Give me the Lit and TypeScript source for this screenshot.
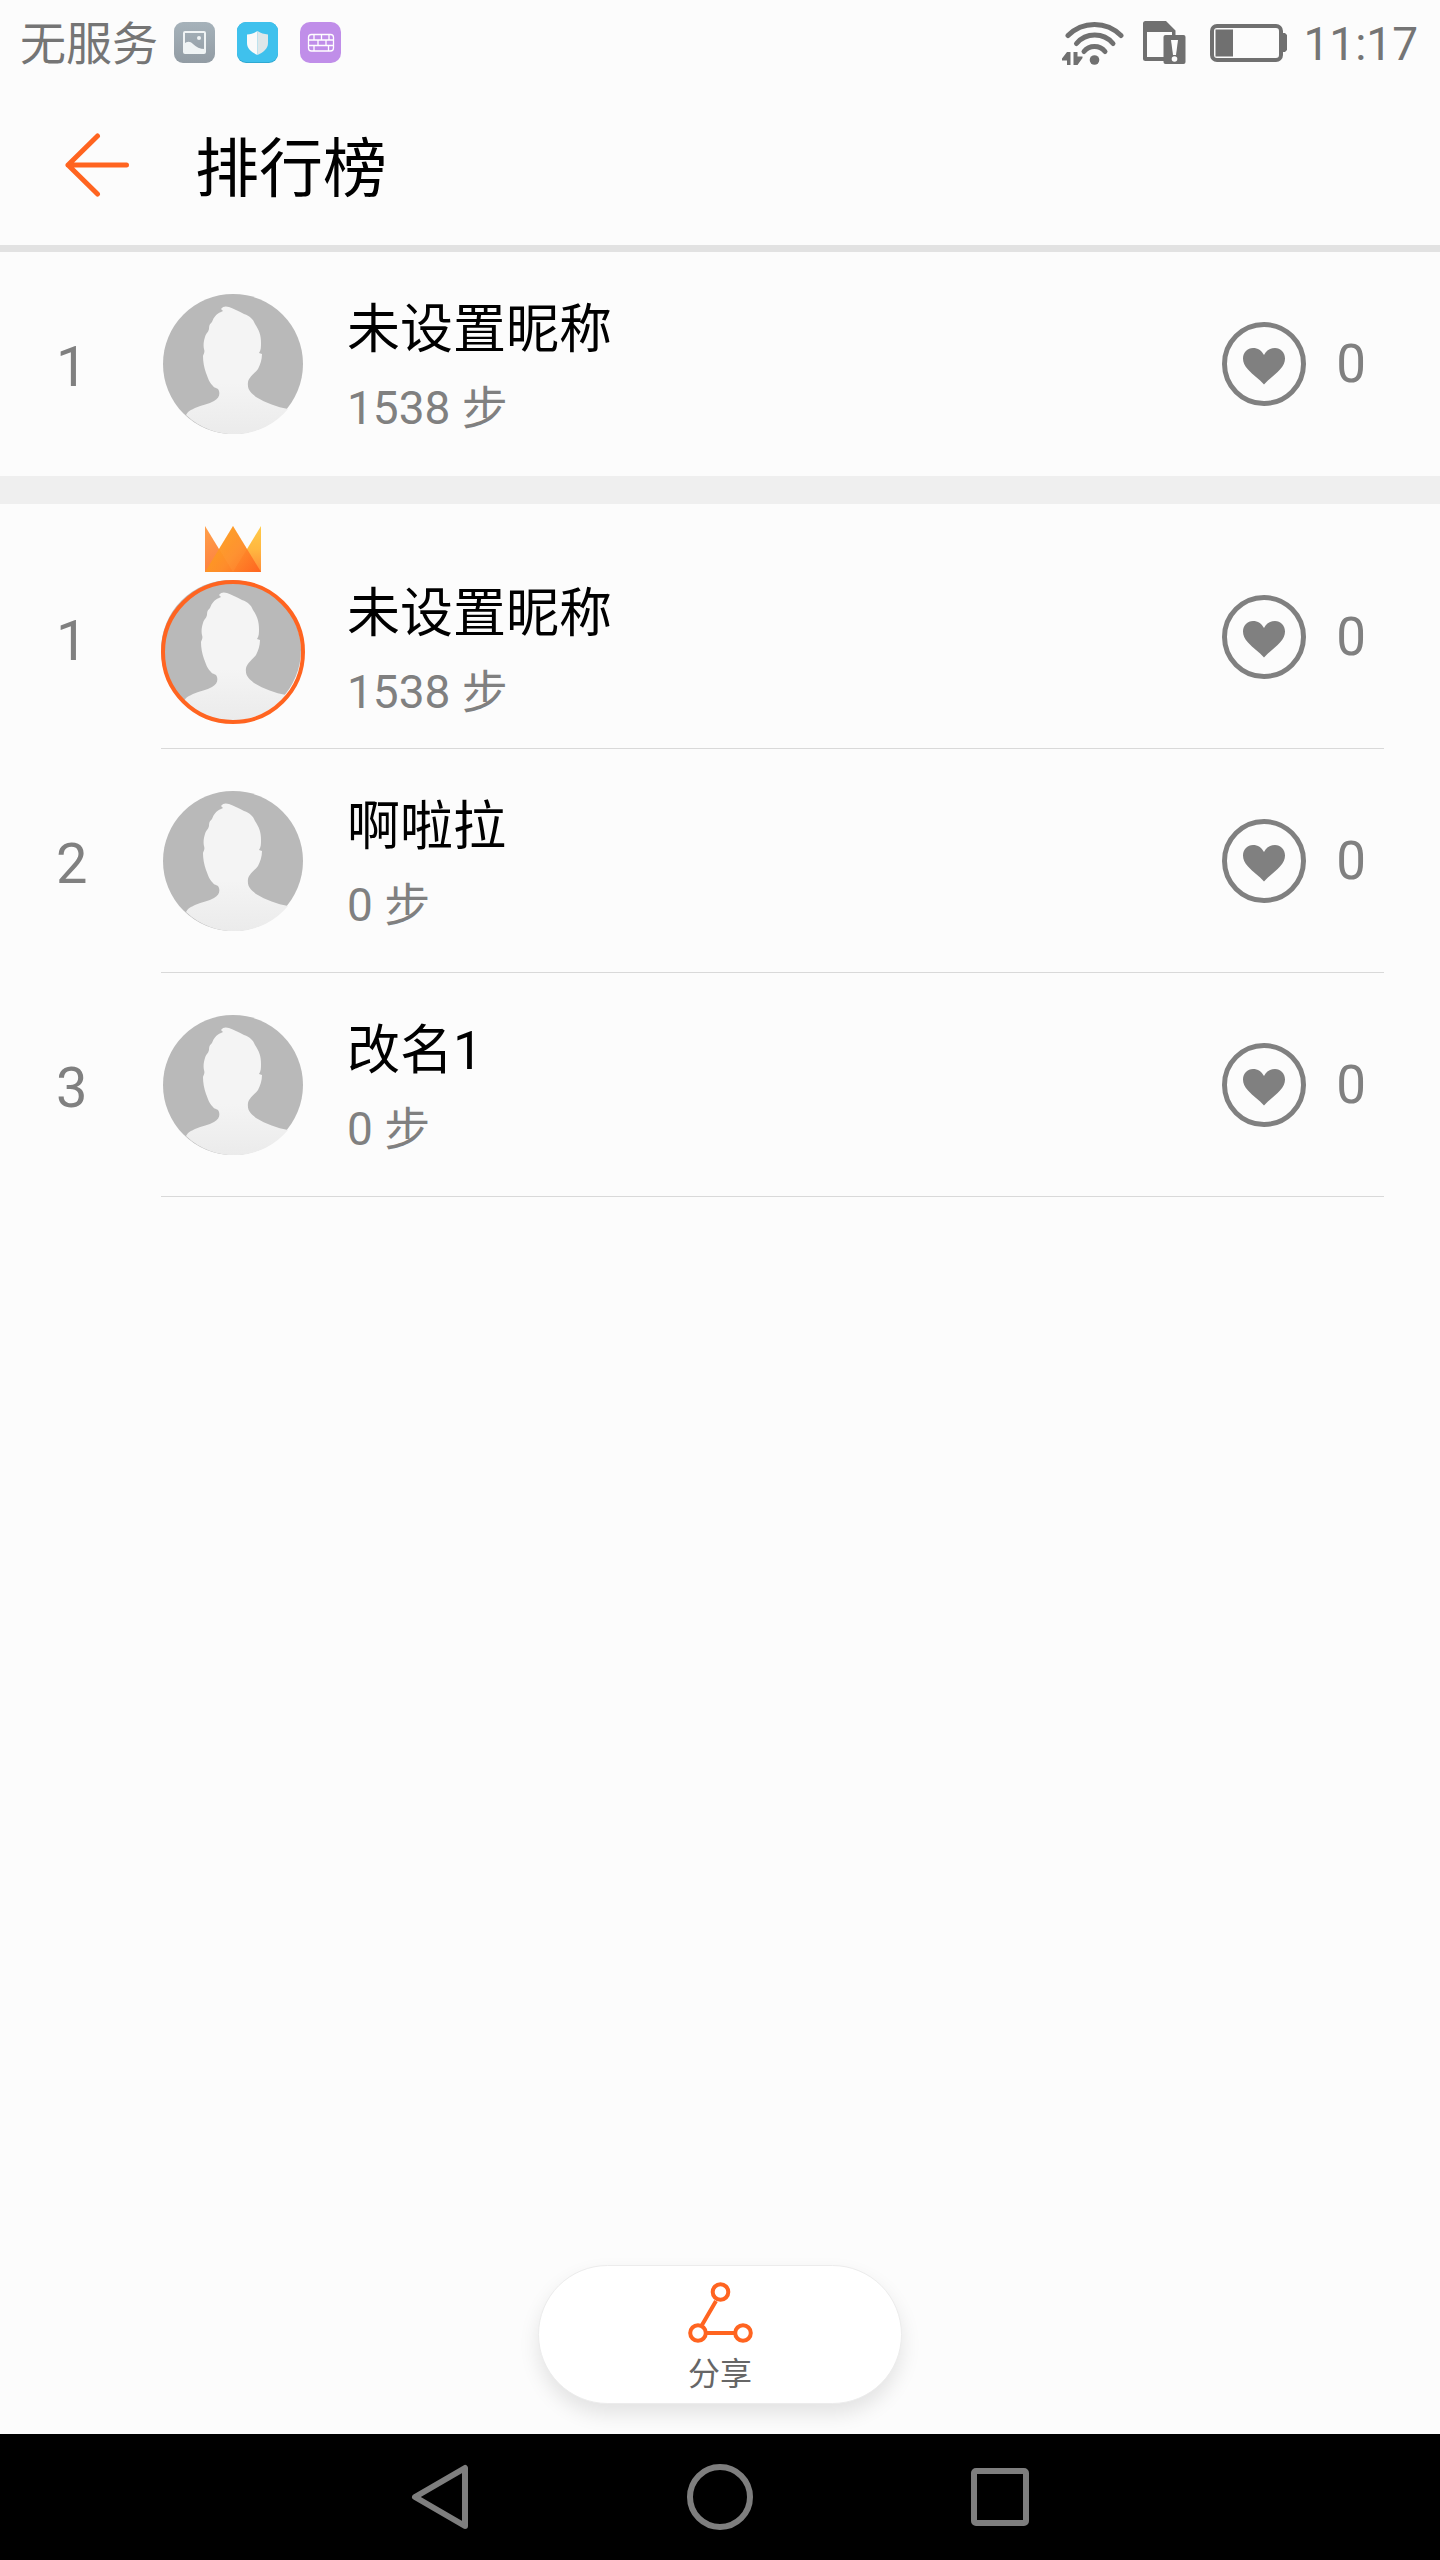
import { LitElement, html, css, svg, nothing } from "lit";
import { customElement, property, state } from "lit/decorators.js";
import { classMap } from "lit/directives/class-map.js";

interface Entry {
  rank: number;
  name: string;
  steps: number;
  likes: number;
  crowned?: boolean;
}

const own: Entry = { rank: 1, name: "未设置昵称", steps: 1538, likes: 0 };

const ranking: Entry[] = [
  { rank: 1, name: "未设置昵称", steps: 1538, likes: 0, crowned: true },
  { rank: 2, name: "啊啦拉", steps: 0, likes: 0 },
  { rank: 3, name: "改名1", steps: 0, likes: 0 },
];

const crown = html`
  <svg class="crown" viewBox="0 0 56 46" aria-hidden="true">
    <defs>
      <linearGradient id="crown-left" x1="0" y1="0" x2="0.3" y2="1">
        <stop offset="0" stop-color="#ffa04a" />
        <stop offset="1" stop-color="#fd8040" />
      </linearGradient>
      <linearGradient id="crown-right" x1="0" y1="0" x2="0" y2="1">
        <stop offset="0" stop-color="#ffca48" />
        <stop offset="0.5" stop-color="#ffb840" />
        <stop offset="1" stop-color="#ff8c38" />
      </linearGradient>
      <linearGradient id="crown-middle" x1="0" y1="0.3" x2="1" y2="1">
        <stop offset="0" stop-color="#fda21c" />
        <stop offset="0.5" stop-color="#fe8d2b" />
        <stop offset="1" stop-color="#ff6420" />
      </linearGradient>
    </defs>
    <path d="M0 0 28 46H0Z" fill="url(#crown-left)" />
    <path d="M56 0 28 46h28Z" fill="url(#crown-right)" />
    <path d="M28 0 56 46H0Z" fill="url(#crown-middle)" />
    <path d="M14 23 28 46 42 23 28 0Z" fill="#ffae50" opacity="0.18" />
  </svg>
`;

const silhouette =
  "M23 121C25 117 28 116 32 114C39 111 46 110 51 107C56 104 57 101 56 97C55 93 52 95 50 92C46 88 45 84 43 79C41 73 40 68 40 62C41 59 42 58 41 55C40 51 41 46 42 43C43 39 45 39 46 35C46 31 47 30 49 28C51 23 53 20 58 18L60 17L58 15C60 12 63 12 66 13C71 15 76 17 81 20C87 22 90 25 92 30C96 36 98 41 98 49C98 53 98 56 96 59L99 60C99 66 97 71 95 75C92 79 86 83 85 88C84 96 88 99 93 103C103 109 114 113 125 115A70 70 0 0 1 23 121Z";

@customElement("leader-row")
export class LeaderRow extends LitElement {
  @property({ attribute: false }) entry!: Entry;
  @property({ type: Boolean }) divided = false;
  @state() private liked = false;

  static styles = css`
    :host {
      display: block;
    }
    .row {
      display: flex;
      align-items: stretch;
      color: #808080;
    }
    .rank {
      box-sizing: border-box;
      flex: none;
      width: 161px;
      padding: 6px 0 0 56px;
      display: flex;
      align-items: center;
      font-size: 56px;
      line-height: 64px;
    }
    .body {
      flex: 1;
      min-width: 0;
      display: flex;
      align-items: center;
      margin-right: 56px;
      padding: 34px 18px 34px 0;
    }
    .divided .body {
      padding-bottom: 33px;
      border-bottom: 1px solid #d9d9d9;
    }
    .portrait {
      flex: none;
      width: 144px;
      display: flex;
      flex-direction: column;
      align-items: center;
      gap: 8px;
    }
    .crown {
      display: block;
      width: 56px;
      height: 46px;
    }
    .avatar {
      display: block;
      width: 140px;
      height: 140px;
    }
    .info {
      flex: 1;
      min-width: 0;
      margin-left: 42px;
    }
    .name {
      margin: 0;
      font-size: 53px;
      line-height: 88px;
      font-weight: 400;
      color: #000;
      overflow-wrap: anywhere;
    }
    .steps {
      margin: 0;
      font-size: 46px;
      line-height: 68px;
    }
    .like {
      flex: none;
      display: flex;
      align-items: center;
      gap: 30px;
      padding: 0;
      border: 0;
      background: none;
      color: inherit;
      font: inherit;
      font-size: 53px;
      line-height: 84px;
      cursor: pointer;
    }
    .heart {
      display: block;
      width: 84px;
      height: 84px;
    }
    .liked {
      color: #ff6420;
    }
    .crowned .body {
      padding-top: 20px;
      padding-bottom: 22px;
    }
    .crowned .rank {
      padding-top: 28px;
    }
    .crowned .like {
      padding-top: 24px;
    }
    .crowned .info {
      padding-top: 46px;
    }
    .crowned .avatar {
      width: 144px;
      height: 144px;
    }
  `;

  private toggle() {
    this.liked = !this.liked;
  }

  render() {
    const { rank, name, steps, likes, crowned } = this.entry;
    return html`
      <div class=${classMap({ row: true, divided: this.divided, crowned: !!crowned })}>
        <div class="rank">${rank}</div>
        <div class="body">
          <div class="portrait">
            ${crowned ? crown : nothing}
            <svg class="avatar" viewBox=${crowned ? "0 0 144 144" : "0 0 140 140"} aria-hidden="true">
              <defs>
                <linearGradient id="person" x1="0" y1="0" x2="0" y2="1">
                  <stop offset="0.6" stop-color="#f4f4f4" />
                  <stop offset="1" stop-color="#ebebeb" />
                </linearGradient>
              </defs>
              <circle cx="70" cy="70" r="70" fill="#b9b9b9" />
              <path d=${silhouette} fill="url(#person)" />
              ${crowned
                ? svg`<circle cx="72" cy="72" r="70" fill="none" stroke="#ff6420" stroke-width="4" />`
                : nothing}
            </svg>
          </div>
          <div class="info">
            <h2 class="name">${name}</h2>
            <p class="steps">${steps} 步</p>
          </div>
          <button
            type="button"
            class=${classMap({ like: true, liked: this.liked })}
            aria-pressed=${this.liked ? "true" : "false"}
            @click=${this.toggle}
          >
            <svg class="heart" viewBox="0 0 84 84" aria-hidden="true">
              <circle cx="42" cy="42" r="39.5" fill="none" stroke="currentColor" stroke-width="5" />
              <path
                d="M42 62.500C37 57 31 53 26 47.500C22.500 43.500 21 40.500 21 36.500C21 30.500 25.500 26 31 26C36 26 39.500 28.500 42 33C44.500 28.500 48 26 53 26C58.500 26 63 30.500 63 36.500C63 40.500 61.500 43.500 58 47.500C53 53 47 57 42 62.500Z"
                fill="currentColor"
              />
            </svg>
            <span>${likes + (this.liked ? 1 : 0)}</span>
          </button>
        </div>
      </div>
    `;
  }
}

@customElement("app-root")
export class AppRoot extends LitElement {
  static styles = css`
    :host {
      display: block;
      font-family: Roboto, "Noto Sans CJK SC", sans-serif;
      background: #fcfcfc;
    }
    .screen {
      min-height: 100vh;
      display: flex;
      flex-direction: column;
    }
    .status {
      display: flex;
      align-items: center;
      justify-content: space-between;
      padding: 0 22px 0 20px;
      color: #757575;
    }
    .carrier,
    .system {
      display: flex;
      align-items: center;
      gap: 22px;
    }
    .carrier-name {
      padding-top: 4px;
      font-size: 46px;
      line-height: 80px;
      margin-right: -6px;
    }
    .app-icon {
      display: block;
      width: 41px;
      height: 41px;
    }
    .system {
      padding-top: 2px;
    }
    .wifi {
      display: block;
      width: 62px;
      height: 44px;
      margin-right: -3px;
    }
    .sim {
      display: block;
      width: 43px;
      height: 44px;
    }
    .battery {
      display: block;
      width: 77px;
      height: 38px;
      margin-left: 2px;
    }
    .time {
      font-size: 46px;
      line-height: 80px;
      padding-top: 2px;
      margin-left: -6px;
    }
    .header {
      display: flex;
      align-items: center;
      gap: 66px;
      padding: 32px 65px;
      border-bottom: 7px solid #e2e2e2;
    }
    .back {
      flex: none;
      padding: 0;
      border: 0;
      background: none;
      cursor: pointer;
    }
    .back-icon {
      display: block;
      width: 64px;
      height: 64px;
    }
    .title {
      margin: 0;
      font-size: 64px;
      line-height: 86px;
      padding-top: 11px;
      font-weight: 400;
      color: #000;
    }
    .main {
      flex: 1;
    }
    .own {
      border-bottom: 28px solid #efefef;
    }
    .list {
      margin: 0;
      padding: 0;
      list-style: none;
    }
    .footer {
      display: flex;
      justify-content: center;
      padding: 30px;
    }
    .share {
      box-sizing: border-box;
      width: 364px;
      display: flex;
      flex-direction: column;
      align-items: center;
      gap: 10px;
      padding: 16px 40px 8px;
      border: 1px solid #ececec;
      border-radius: 70px;
      background: #fff;
      box-shadow: 0 10px 20px rgba(0, 0, 0, 0.1);
      color: #666;
      font: inherit;
      font-size: 32px;
      line-height: 42px;
      cursor: pointer;
    }
    .share-icon {
      display: block;
      width: 65px;
      height: 61px;
    }
    .nav {
      display: flex;
      justify-content: center;
      background: #000;
      color: #7e7e7e;
    }
    .nav-button {
      width: 280px;
      display: flex;
      justify-content: center;
      padding: 30px 0;
      border: 0;
      background: none;
      color: inherit;
      cursor: pointer;
    }
    .nav-icon {
      display: block;
      width: 66px;
      height: 66px;
    }
  `;

  private renderStatus() {
    return html`
      <div class="status">
        <div class="carrier">
          <span class="carrier-name">无服务</span>
          <svg class="app-icon" viewBox="0 0 41 41" aria-hidden="true">
            <defs>
              <linearGradient id="gallery" x1="0" y1="0" x2="0" y2="1">
                <stop offset="0" stop-color="#a6b2ba" />
                <stop offset="1" stop-color="#929ca4" />
              </linearGradient>
            </defs>
            <rect width="41" height="41" rx="9" fill="url(#gallery)" />
            <rect x="10" y="10" width="21" height="21" rx="1" fill="none" stroke="#f0f4f5" stroke-width="2" />
            <path d="M10 22C13 19 16 19 19 22C22 25 26 27 31 27V31H10Z" fill="#f0f4f5" />
            <circle cx="25" cy="16" r="2" fill="#f0f4f5" />
          </svg>
          <svg class="app-icon" viewBox="0 0 41 41" aria-hidden="true">
            <rect width="41" height="41" rx="9" fill="#2fa9d2" />
            <rect width="41" height="40" rx="9" fill="#3fc1ed" />
            <path d="M20.500 9C17 11.500 14 12 10 12.500V21C10 27 15 30.500 20.500 33Z" fill="#fafafa" />
            <path d="M20.500 9C24 11.500 27 12 31 12.500V21C31 27 26 30.500 20.500 33Z" fill="#dfe7e9" />
          </svg>
          <svg class="app-icon" viewBox="0 0 41 41" aria-hidden="true">
            <rect width="41" height="41" rx="10" fill="#c08ee9" />
            <g fill="none" stroke="#fff" stroke-width="1.300">
              <rect x="8.500" y="12.500" width="25" height="16.500" rx="3" />
              <path d="M8.500 18H33.500M8.500 23.500H33.500M14 12.500V18M21.500 12.500V18M29 12.500V18M18 18V23.500M26 18V23.500M14 23.500V29M28.500 23.500V29" />
            </g>
          </svg>
        </div>
        <div class="system">
          <svg class="wifi" viewBox="0 0 62 44" aria-hidden="true">
            <g fill="none" stroke="#707070" stroke-width="5" stroke-linecap="round">
              <path d="M6 14.500A37.200 37.200 0 0 1 59 14.500" />
              <path d="M14.500 22.500A24 24 0 0 1 51 22.500" />
              <path d="M22 30.500A13.500 13.500 0 0 1 43 30.500" />
            </g>
            <circle cx="32.500" cy="39" r="4.800" fill="#707070" />
            <path d="M0 37.500 5 31H8.500V44H5V39.500H0Z M11.500 31H15.500V35.500H20.500V37L15.500 44H11.500Z" fill="#707070" />
          </svg>
          <svg class="sim" viewBox="0 0 43 44" aria-hidden="true">
            <path
              d="M2.500 0H23L32.500 9.500V40H2.500Q0 40 0 37.500V2.500Q0 0 2.500 0ZM4 11V36H29V11Z"
              fill="#707070"
              fill-rule="evenodd"
            />
            <rect x="20.500" y="14" width="22" height="29" rx="2" fill="#707070" />
            <path d="M28 19H35L33 34H30Z" fill="#fcfcfc" />
            <circle cx="31.500" cy="38" r="2.800" fill="#fcfcfc" />
          </svg>
          <svg class="battery" viewBox="0 0 77 38" aria-hidden="true">
            <rect x="2" y="2" width="69" height="34" rx="5" fill="none" stroke="#707070" stroke-width="4" />
            <rect x="5.500" y="5.500" width="17.500" height="27" fill="#707070" />
            <path d="M73 9H75L77 11V26L75 28H73Z" fill="#707070" />
          </svg>
          <time class="time">11:17</time>
        </div>
      </div>
    `;
  }

  render() {
    return html`
      <div class="screen">
        ${this.renderStatus()}
        <header class="header">
          <button type="button" class="back" aria-label="返回">
            <svg class="back-icon" viewBox="0 0 64 64" aria-hidden="true">
              <path
                d="M32.500 3 3 32 32.500 61M3 32H61.500"
                fill="none"
                stroke="#ff6420"
                stroke-width="5"
                stroke-linecap="round"
                stroke-linejoin="round"
              />
            </svg>
          </button>
          <h1 class="title">排行榜</h1>
        </header>
        <main class="main">
          <section class="own">
            <leader-row .entry=${own}></leader-row>
          </section>
          <ol class="list">
            ${ranking.map((entry) => html`<li><leader-row .entry=${entry} divided></leader-row></li>`)}
          </ol>
        </main>
        <footer class="footer">
          <button type="button" class="share">
            <svg class="share-icon" viewBox="0 0 65 61" aria-hidden="true">
              <g fill="none" stroke="#ff6420" stroke-width="4">
                <path d="M14 43 28 19M19 51H46" />
                <circle cx="32.500" cy="10" r="7.800" />
                <circle cx="10" cy="51" r="7.800" />
                <circle cx="55" cy="51" r="7.800" />
              </g>
            </svg>
            <span>分享</span>
          </button>
        </footer>
        <nav class="nav">
          <button type="button" class="nav-button" aria-label="后退">
            <svg class="nav-icon" viewBox="0 0 66 66" aria-hidden="true">
              <path
                d="M58 4V62L8 33Z"
                fill="none"
                stroke="currentColor"
                stroke-width="6"
                stroke-linejoin="round"
              />
            </svg>
          </button>
          <button type="button" class="nav-button" aria-label="主屏幕">
            <svg class="nav-icon" viewBox="0 0 66 66" aria-hidden="true">
              <circle cx="33" cy="33" r="30" fill="none" stroke="currentColor" stroke-width="6" />
            </svg>
          </button>
          <button type="button" class="nav-button" aria-label="最近任务">
            <svg class="nav-icon" viewBox="0 0 66 66" aria-hidden="true">
              <rect x="7" y="7" width="52" height="52" rx="2" fill="none" stroke="currentColor" stroke-width="6" />
            </svg>
          </button>
        </nav>
      </div>
    `;
  }
}
